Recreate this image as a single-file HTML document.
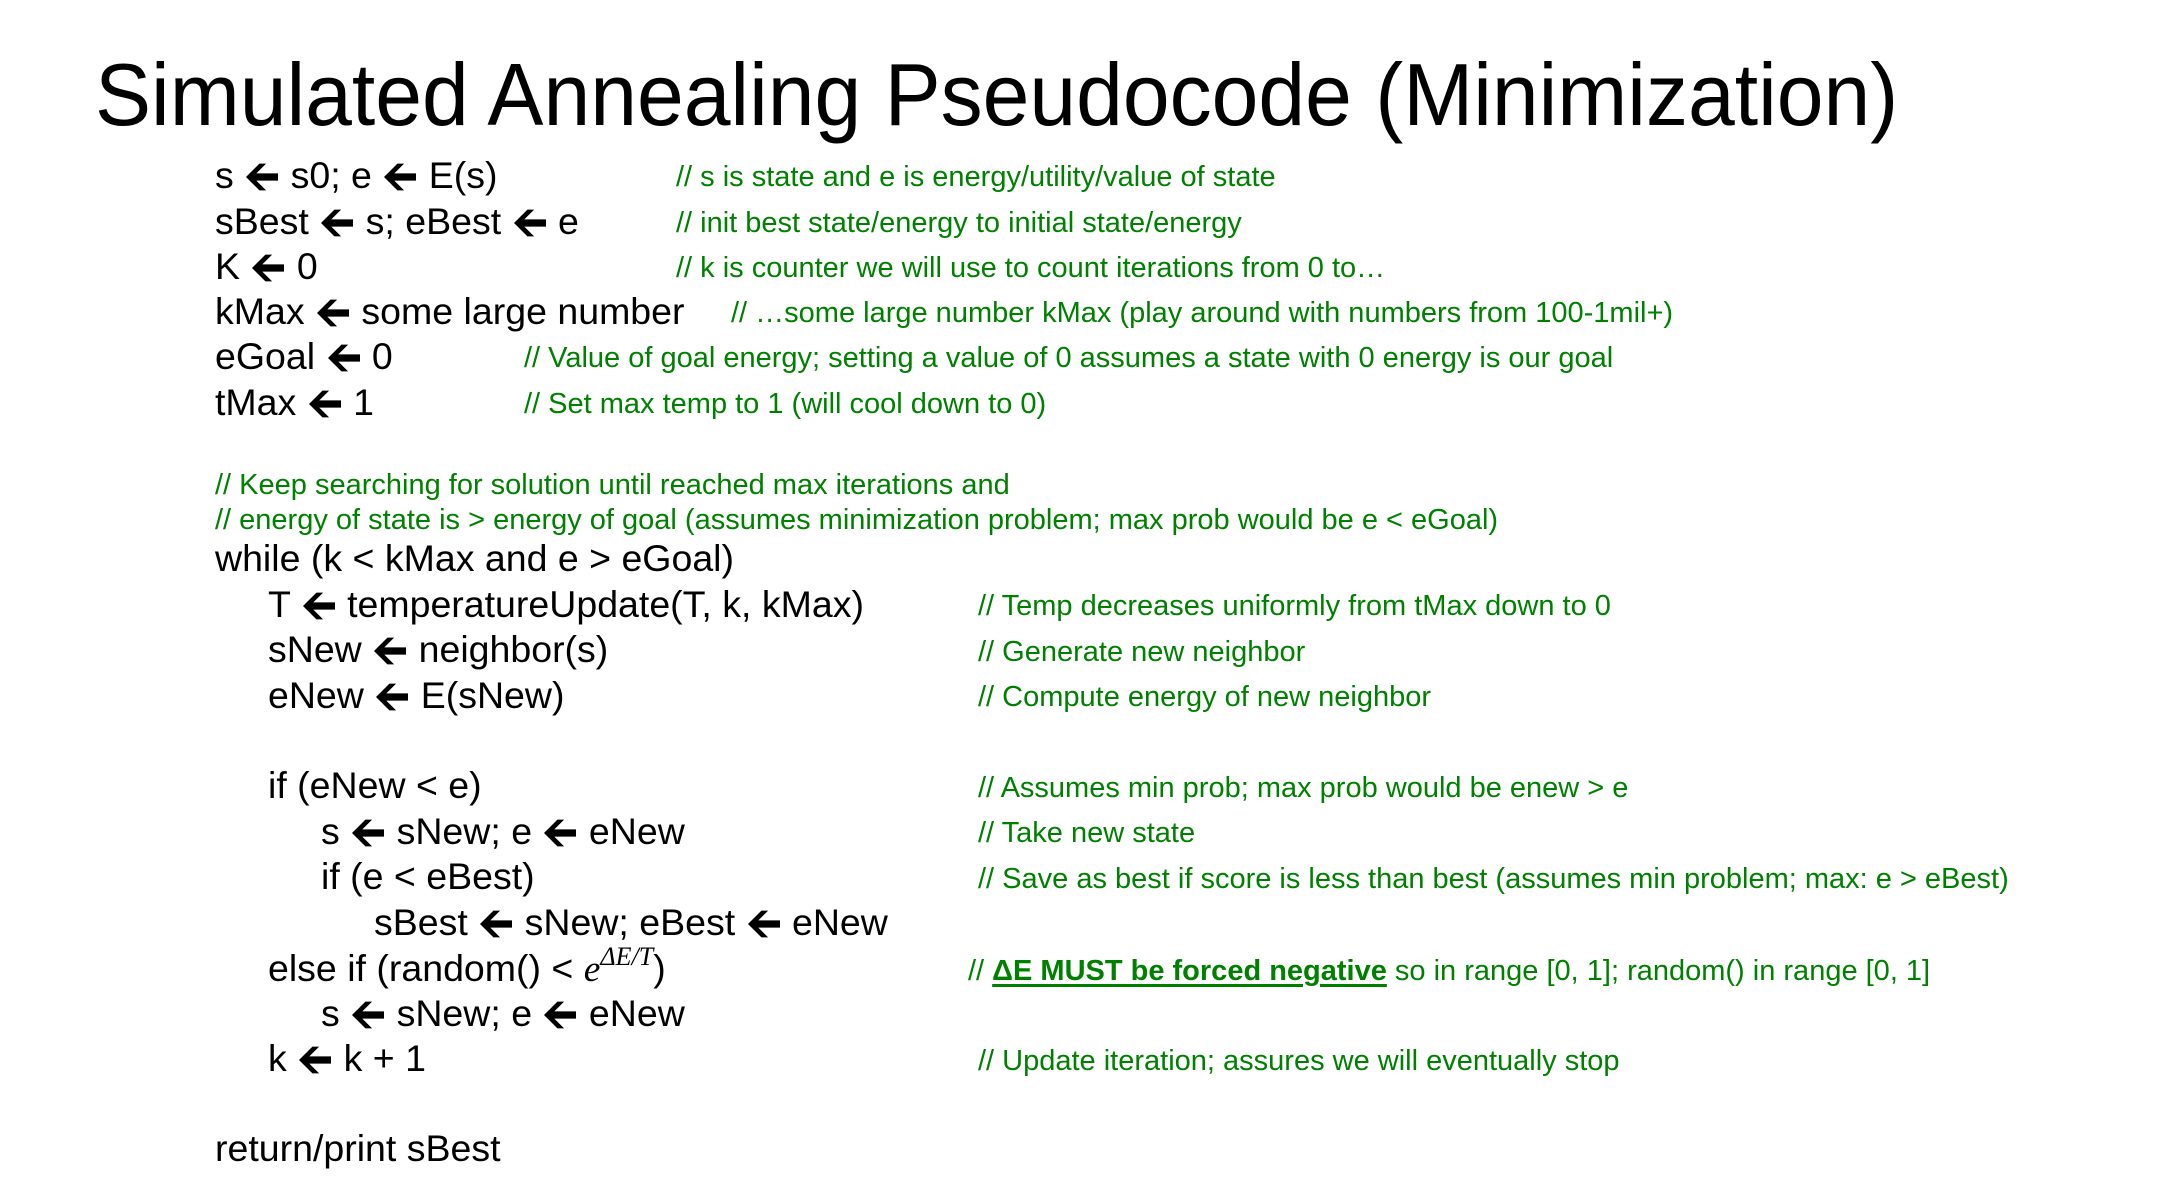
<!DOCTYPE html>
<html><head><meta charset="utf-8">
<style>
html,body{margin:0;padding:0;background:#fff;}
body{width:2163px;height:1191px;position:relative;overflow:hidden;font-family:"Liberation Sans",Arial,sans-serif;}
.t{position:absolute;left:95px;top:45px;font-size:88px;line-height:100px;white-space:nowrap;transform-origin:0 0;transform:scaleX(0.955);color:#000;}
.c{position:absolute;font-size:37.5px;line-height:44px;height:44px;white-space:nowrap;color:#000;}
.g{position:absolute;font-size:29px;line-height:36px;height:36px;white-space:nowrap;color:#008000;}
svg.a{width:32px;height:28px;vertical-align:-3px;margin:0 2px;}
.m{font-family:"Liberation Serif",serif;font-style:italic;}
.m sup{font-size:26px;position:relative;top:-16px;vertical-align:baseline;line-height:0;}
u{text-decoration-thickness:3px;text-underline-offset:4px;}
</style></head><body>
<svg width="0" height="0" style="position:absolute"><defs><symbol id="ar" viewBox="0 0 31 27"><path d="M0 13.5 L13 0.5 L19.5 0.5 L10 10 L31 10 L31 17 L10 17 L19.5 26.5 L13 26.5 Z" fill="#000"/></symbol></defs></svg>
<div class="t">Simulated Annealing Pseudocode (Minimization)</div>

<div class="c" style="left:215px;top:153px">s <svg class="a"><use href="#ar"/></svg> s0; e <svg class="a"><use href="#ar"/></svg> E(s)</div>
<div class="g" style="left:676px;top:159px">// s is state and e is energy/utility/value of state</div>

<div class="c" style="left:215px;top:199px">sBest <svg class="a"><use href="#ar"/></svg> s; eBest <svg class="a"><use href="#ar"/></svg> e</div>
<div class="g" style="left:676px;top:205px">// init best state/energy to initial state/energy</div>

<div class="c" style="left:215px;top:244px">K <svg class="a"><use href="#ar"/></svg> 0</div>
<div class="g" style="left:676px;top:250px">// k is counter we will use to count iterations from 0 to…</div>

<div class="c" style="left:215px;top:289px">kMax <svg class="a"><use href="#ar"/></svg> some large number</div>
<div class="g" style="left:731px;top:295px">// …some large number kMax (play around with numbers from 100-1mil+)</div>

<div class="c" style="left:215px;top:334px">eGoal <svg class="a"><use href="#ar"/></svg> 0</div>
<div class="g" style="left:524px;top:340px">// Value of goal energy; setting a value of 0 assumes a state with 0 energy is our goal</div>

<div class="c" style="left:215px;top:380px">tMax <svg class="a"><use href="#ar"/></svg> 1</div>
<div class="g" style="left:524px;top:386px">// Set max temp to 1 (will cool down to 0)</div>

<div class="g" style="left:215px;top:467px">// Keep searching for solution until reached max iterations and</div>
<div class="g" style="left:215px;top:502px">// energy of state is &gt; energy of goal (assumes minimization problem; max prob would be e &lt; eGoal)</div>

<div class="c" style="left:215px;top:536px">while (k &lt; kMax and e &gt; eGoal)</div>

<div class="c" style="left:268px;top:582px">T <svg class="a"><use href="#ar"/></svg> temperatureUpdate(T, k, kMax)</div>
<div class="g" style="left:978px;top:588px">// Temp decreases uniformly from tMax down to 0</div>

<div class="c" style="left:268px;top:627px">sNew <svg class="a"><use href="#ar"/></svg> neighbor(s)</div>
<div class="g" style="left:978px;top:634px">// Generate new neighbor</div>

<div class="c" style="left:268px;top:673px">eNew <svg class="a"><use href="#ar"/></svg> E(sNew)</div>
<div class="g" style="left:978px;top:679px">// Compute energy of new neighbor</div>

<div class="c" style="left:268px;top:763px">if (eNew &lt; e)</div>
<div class="g" style="left:978px;top:770px">// Assumes min prob; max prob would be enew &gt; e</div>

<div class="c" style="left:321px;top:809px">s <svg class="a"><use href="#ar"/></svg> sNew; e <svg class="a"><use href="#ar"/></svg> eNew</div>
<div class="g" style="left:978px;top:815px">// Take new state</div>

<div class="c" style="left:321px;top:854px">if (e &lt; eBest)</div>
<div class="g" style="left:978px;top:861px">// Save as best if score is less than best (assumes min problem; max: e &gt; eBest)</div>

<div class="c" style="left:374px;top:900px">sBest <svg class="a"><use href="#ar"/></svg> sNew; eBest <svg class="a"><use href="#ar"/></svg> eNew</div>

<div class="c" style="left:268px;top:946px">else if (random() &lt; <span class="m">e<sup>ΔE/T</sup></span>)</div>
<div class="g" style="left:968px;top:953px">// <u><b>ΔE MUST be forced negative</b></u> so in range [0, 1]; random() in range [0, 1]</div>

<div class="c" style="left:321px;top:991px">s <svg class="a"><use href="#ar"/></svg> sNew; e <svg class="a"><use href="#ar"/></svg> eNew</div>

<div class="c" style="left:268px;top:1036px">k <svg class="a"><use href="#ar"/></svg> k + 1</div>
<div class="g" style="left:978px;top:1043px">// Update iteration; assures we will eventually stop</div>

<div class="c" style="left:215px;top:1126px">return/print sBest</div>
</body></html>
